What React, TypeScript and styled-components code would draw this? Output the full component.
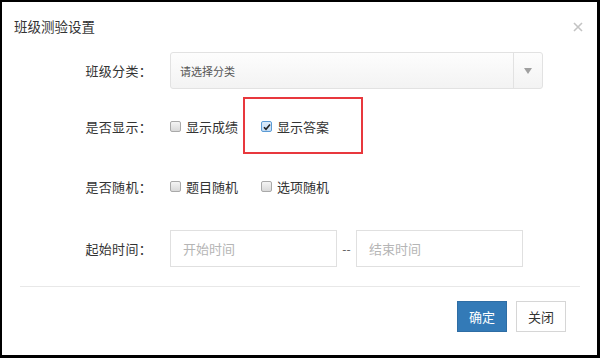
import styled, { createGlobalStyle } from "styled-components"

const GlobalStyle = createGlobalStyle`
  html, body {
    margin: 0;
    padding: 0;
    background: #000;
  }
  #root {
    width: 600px;
    height: 358px;
    box-sizing: border-box;
    padding: 2px 3px 3px 2px;
  }
`

const font = `"Microsoft YaHei", "Noto Sans CJK SC", "Noto Sans", sans-serif`

const Dialog = styled.div`
  position: relative;
  width: 100%;
  height: 100%;
  background: #fff;
  display: flex;
  flex-direction: column;
  font-family: ${font};
  color: #333;
`

const Header = styled.div`
  height: 50px;
  display: flex;
  align-items: center;
  justify-content: space-between;
  padding: 0 14px 0 12px;
  box-sizing: border-box;
`

const Title = styled.h4`
  margin: 0;
  font-size: 13.5px;
  font-weight: normal;
  color: #333;
  line-height: 1;
  position: relative;
  top: 0;
`

const CloseIcon = styled.svg`
  width: 10px;
  height: 10px;
`

const Body = styled.div`
  display: flex;
  flex-direction: column;
`

const Row = styled.div<{ $mt: number }>`
  display: grid;
  grid-template-columns: 150px 1fr;
  column-gap: 18px;
  align-items: center;
  height: 37px;
  margin-top: ${(p) => p.$mt}px;
`

const Label = styled.label`
  text-align: right;
  font-size: 13px;
  color: #333;
  letter-spacing: 0.3px;
`

const Select = styled.div`
  width: 373px;
  height: 37px;
  box-sizing: border-box;
  border: 1px solid #e2e2e2;
  border-radius: 3px;
  background: linear-gradient(#fdfdfd, #f3f3f3);
  display: flex;
  align-items: stretch;
`

const SelectText = styled.span`
  flex: 1;
  display: flex;
  align-items: center;
  padding-left: 9px;
  font-size: 11px;
  color: #555;
`

const SelectArrow = styled.span`
  width: 28px;
  border-left: 1px solid #e2e2e2;
  display: flex;
  align-items: center;
  justify-content: center;
`

const Checks = styled.div`
  display: flex;
  align-items: center;
  gap: 23px;
`

const CheckItem = styled.label`
  display: flex;
  align-items: center;
  gap: 5px;
  font-size: 13px;
  color: #333;
`

const Box = styled.span<{ $checked?: boolean }>`
  width: 11px;
  height: 11px;
  box-sizing: border-box;
  border-radius: 2px;
  border: 1px solid ${(p) => (p.$checked ? "#5b9bd5" : "#a9a9a9")};
  background: ${(p) =>
    p.$checked
      ? "linear-gradient(#dcebfa, #c2dcf5)"
      : "linear-gradient(#f4f4f4, #d9d9d9)"};
  display: flex;
  align-items: center;
  justify-content: center;
`

const Times = styled.div`
  display: flex;
  align-items: center;
`

const TimeInput = styled.div`
  width: 167px;
  height: 37px;
  box-sizing: border-box;
  border: 1px solid #e0e0e0;
  display: flex;
  align-items: center;
  padding-left: 12px;
  font-size: 13px;
  color: #b5b5b5;
`

const Dash = styled.span`
  width: 19px;
  text-align: center;
  font-size: 12px;
  color: #555;
`

const Footer = styled.div`
  margin: 19px 17px 0 18px;
  border-top: 1px solid #e8e8e8;
  padding: 14px 14px 0 0;
  display: flex;
  justify-content: flex-end;
  gap: 9px;
`

const Button = styled.button<{ $primary?: boolean }>`
  width: 50px;
  height: 31px;
  box-sizing: border-box;
  padding: 0;
  font-family: ${font};
  font-size: 13px;
  border-radius: 0;
  border: 1px solid ${(p) => (p.$primary ? "#2e6da4" : "#d6d6d6")};
  background: ${(p) => (p.$primary ? "#337ab7" : "#fff")};
  color: ${(p) => (p.$primary ? "#fff" : "#333")};
`

const Highlight = styled.div`
  position: absolute;
  left: 241px;
  top: 95px;
  width: 120px;
  height: 57px;
  box-sizing: border-box;
  border: 2px solid #e8383d;
  pointer-events: none;
`

function Check({ label, checked }: { label: string; checked?: boolean }) {
  return (
    <CheckItem>
      <Box $checked={checked}>
        {checked && (
          <svg width="8" height="8" viewBox="0 0 8 8">
            <path d="M1 4.2 L3 6.3 L7 1.5" fill="none" stroke="#222" strokeWidth="1.6" />
          </svg>
        )}
      </Box>
      {label}
    </CheckItem>
  )
}

export default function App() {
  return (
    <>
      <GlobalStyle />
      <Dialog>
        <Header>
          <Title>班级测验设置</Title>
          <CloseIcon viewBox="0 0 10 10">
            <path d="M1 1 L9 9 M9 1 L1 9" stroke="#c4c4c4" strokeWidth="1.6" />
          </CloseIcon>
        </Header>

        <Body>
          <Row $mt={0}>
            <Label>班级分类：</Label>
            <Select>
              <SelectText>请选择分类</SelectText>
              <SelectArrow>
                <svg width="8" height="6" viewBox="0 0 8 6">
                  <path d="M0 0 H8 L4 6 Z" fill="#a0a0a0" />
                </svg>
              </SelectArrow>
            </Select>
          </Row>

          <Row $mt={19}>
            <Label>是否显示：</Label>
            <Checks>
              <Check label="显示成绩" />
              <Check label="显示答案" checked />
            </Checks>
          </Row>

          <Row $mt={23}>
            <Label>是否随机：</Label>
            <Checks>
              <Check label="题目随机" />
              <Check label="选项随机" />
            </Checks>
          </Row>

          <Row $mt={25}>
            <Label>起始时间：</Label>
            <Times>
              <TimeInput>开始时间</TimeInput>
              <Dash>--</Dash>
              <TimeInput>结束时间</TimeInput>
            </Times>
          </Row>
        </Body>

        <Footer>
          <Button $primary>确定</Button>
          <Button>关闭</Button>
        </Footer>

        <Highlight />
      </Dialog>
    </>
  )
}
